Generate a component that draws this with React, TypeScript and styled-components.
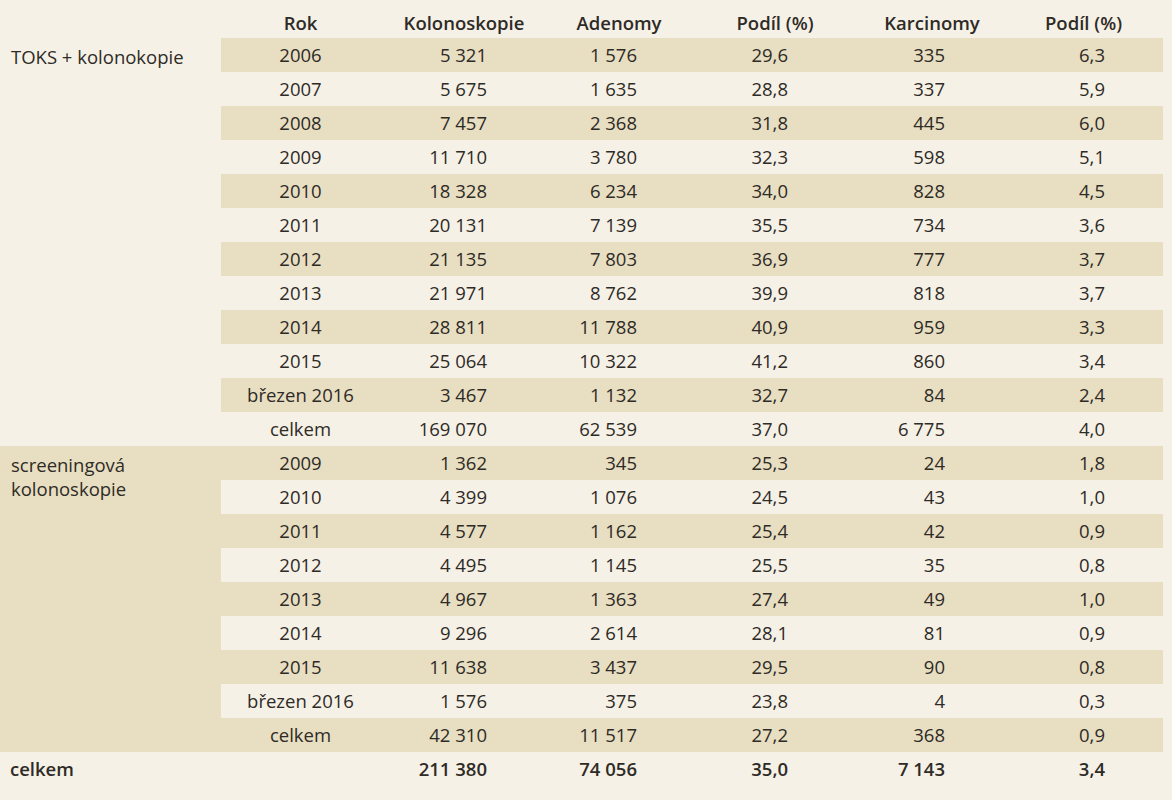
import { Fragment } from "react";
import styled, { createGlobalStyle } from "styled-components";

const GlobalStyle = createGlobalStyle`
  html, body {
    margin: 0;
    padding: 0;
    background: #f6f1e7;
  }
  body {
    font-family: "Open Sans", "Noto Sans", sans-serif;
    color: #2e2b26;
  }
`;

const TAN = "#e8dec2";
const CREAM = "#f6f1e7";

// column widths and right padding for numbers
const columns = [
  { key: "kolo", title: "Kolonoskopie", width: 168, pad: 61 },
  { key: "aden", title: "Adenomy", width: 142, pad: 53 },
  { key: "p1", title: "Podíl (%)", width: 170, pad: 72 },
  { key: "karc", title: "Karcinomy", width: 144, pad: 59 },
  { key: "p2", title: "Podíl (%)", width: 159, pad: 58 },
];

type Row = { rok: string; vals: string[] };

const sections: { label: string[]; base: "cream" | "tan"; rows: Row[] }[] = [
  {
    label: ["TOKS + kolonokopie"],
    base: "cream",
    rows: [
      { rok: "2006", vals: ["5 321", "1 576", "29,6", "335", "6,3"] },
      { rok: "2007", vals: ["5 675", "1 635", "28,8", "337", "5,9"] },
      { rok: "2008", vals: ["7 457", "2 368", "31,8", "445", "6,0"] },
      { rok: "2009", vals: ["11 710", "3 780", "32,3", "598", "5,1"] },
      { rok: "2010", vals: ["18 328", "6 234", "34,0", "828", "4,5"] },
      { rok: "2011", vals: ["20 131", "7 139", "35,5", "734", "3,6"] },
      { rok: "2012", vals: ["21 135", "7 803", "36,9", "777", "3,7"] },
      { rok: "2013", vals: ["21 971", "8 762", "39,9", "818", "3,7"] },
      { rok: "2014", vals: ["28 811", "11 788", "40,9", "959", "3,3"] },
      { rok: "2015", vals: ["25 064", "10 322", "41,2", "860", "3,4"] },
      { rok: "březen 2016", vals: ["3 467", "1 132", "32,7", "84", "2,4"] },
      { rok: "celkem", vals: ["169 070", "62 539", "37,0", "6 775", "4,0"] },
    ],
  },
  {
    label: ["screeningová", "kolonoskopie"],
    base: "tan",
    rows: [
      { rok: "2009", vals: ["1 362", "345", "25,3", "24", "1,8"] },
      { rok: "2010", vals: ["4 399", "1 076", "24,5", "43", "1,0"] },
      { rok: "2011", vals: ["4 577", "1 162", "25,4", "42", "0,9"] },
      { rok: "2012", vals: ["4 495", "1 145", "25,5", "35", "0,8"] },
      { rok: "2013", vals: ["4 967", "1 363", "27,4", "49", "1,0"] },
      { rok: "2014", vals: ["9 296", "2 614", "28,1", "81", "0,9"] },
      { rok: "2015", vals: ["11 638", "3 437", "29,5", "90", "0,8"] },
      { rok: "březen 2016", vals: ["1 576", "375", "23,8", "4", "0,3"] },
      { rok: "celkem", vals: ["42 310", "11 517", "27,2", "368", "0,9"] },
    ],
  },
];

const total = ["211 380", "74 056", "35,0", "7 143", "3,4"];

const Page = styled.div`
  width: 1163px;
  height: 800px;
  background: ${CREAM};
`;

const Table = styled.table`
  width: 1163px;
  border-collapse: collapse;
  table-layout: fixed;
  font-size: 18.5px;
  line-height: 24px;
`;

const HeadCell = styled.th`
  height: 30px;
  padding: 8px 0 0;
  font-weight: 600;
  text-align: center;
  vertical-align: middle;
  white-space: nowrap;
`;

const LabelCell = styled.td<{ $tan?: boolean }>`
  padding: 7px 0 0 11px;
  vertical-align: top;
  background: ${(p) => (p.$tan ? TAN : "transparent")};
`;

const Cell = styled.td<{ $stripe: boolean; $pad?: number; $center?: boolean }>`
  height: 34px;
  padding: 0 ${(p) => (p.$pad ? `${p.$pad}px` : 0)} 0 0;
  text-align: ${(p) => (p.$center ? "center" : "right")};
  vertical-align: middle;
  white-space: nowrap;
  background: ${(p) => (p.$stripe ? TAN : CREAM)};
`;

const TotalCell = styled.td<{ $pad?: number }>`
  height: 34px;
  padding: 0 ${(p) => (p.$pad ? `${p.$pad}px` : 0)} 0 0;
  text-align: right;
  font-weight: 600;
  white-space: nowrap;
`;

const TotalLabel = styled.td`
  padding-left: 10px;
  font-weight: 600;
`;

export default function App() {
  return (
    <>
      <GlobalStyle />
      <Page>
        <Table>
          <colgroup>
            <col style={{ width: 221 }} />
            <col style={{ width: 159 }} />
            {columns.map((c) => (
              <col key={c.key} style={{ width: c.width }} />
            ))}
          </colgroup>
          <thead>
            <tr>
              <HeadCell />
              <HeadCell>Rok</HeadCell>
              {columns.map((c) => (
                <HeadCell key={c.key}>{c.title}</HeadCell>
              ))}
            </tr>
          </thead>
          <tbody>
            {sections.map((s, si) => (
              <Fragment key={si}>
                {s.rows.map((r, ri) => {
                  // both sections start on a tan row
                  const stripe = ri % 2 === 0;
                  return (
                    <tr key={ri}>
                      {ri === 0 && (
                        <LabelCell rowSpan={s.rows.length} $tan={s.base === "tan"}>
                          {s.label.map((l, li) => (
                            <div key={li}>{l}</div>
                          ))}
                        </LabelCell>
                      )}
                      <Cell $stripe={stripe} $center>
                        {r.rok}
                      </Cell>
                      {r.vals.map((v, vi) => (
                        <Cell key={vi} $stripe={stripe} $pad={columns[vi].pad}>
                          {v}
                        </Cell>
                      ))}
                    </tr>
                  );
                })}
              </Fragment>
            ))}
            <tr>
              <TotalLabel>celkem</TotalLabel>
              <td />
              {total.map((v, vi) => (
                <TotalCell key={vi} $pad={columns[vi].pad}>
                  {v}
                </TotalCell>
              ))}
            </tr>
          </tbody>
        </Table>
      </Page>
    </>
  );
}
